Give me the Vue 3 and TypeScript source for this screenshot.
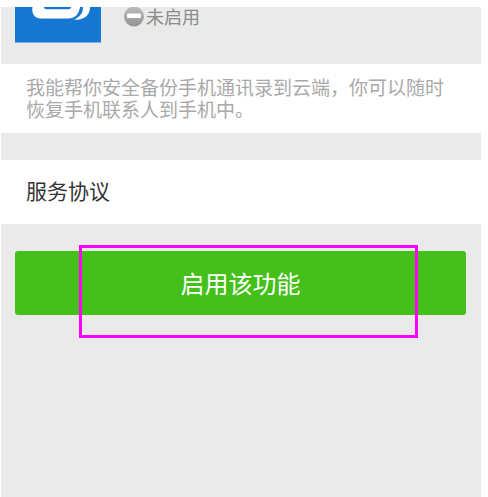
<script setup lang="ts">
import { ref } from 'vue'

const enabled = ref<boolean>(false)

function enable(): void {
  enabled.value = true
}
</script>

<template>
  <main class="screen">
    <header class="plugin">
      <svg class="logo" viewBox="0 0 86 36" aria-hidden="true">
        <path fill="#1677d3" d="M0 0h86v35.5H0z" />
        <path fill="#fff" d="M17.5 0C16.5 6 19 11.5 26 11.5H53C60 11.5 64 7 65 0H56C56 1.500 55 2.200 53 2.200H32C30 2.200 29 1.500 29 0Z" />
        <path fill="#fff" d="M68 0C68 6 65 10 59 12.500C68 13.500 75 9 75 0Z" />
      </svg>
      <p class="status">
        <svg class="badge" viewBox="0 0 20 20" aria-hidden="true">
          <defs>
            <linearGradient id="badge-fill" x1="0" y1="0" x2="0" y2="1">
              <stop offset="0" stop-color="#bdbdbd" />
              <stop offset="1" stop-color="#929292" />
            </linearGradient>
          </defs>
          <circle cx="10" cy="9.500" r="10" fill="url(#badge-fill)" />
          <rect x="3" y="6.500" width="14" height="4.500" rx="1" fill="#fff" />
        </svg>
        <span>{{ enabled ? '已启用' : '未启用' }}</span>
      </p>
    </header>

    <p class="intro">我能帮你安全备份手机通讯录到云端，你可以随时恢复手机联系人到手机中。</p>

    <a class="terms" href="#">服务协议</a>

    <div class="action">
      <button class="enable" type="button" @click="enable">启用该功能</button>
      <div class="highlight"></div>
    </div>
  </main>
</template>

<style>
body {
  background: #fff;
}
</style>

<style scoped>
.screen {
  box-sizing: border-box;
  min-height: calc(100vh - 7px);
  margin: 7px 7px 0 1px;
  background: #eaeaea;
  font-family: "Noto Sans CJK SC", sans-serif;
}

.plugin {
  display: flex;
  align-items: flex-start;
  gap: 23px;
  height: 57px;
  padding-left: 14px;
}

.logo {
  width: 86px;
  height: 36px;
}

.status {
  display: flex;
  align-items: flex-start;
  gap: 2px;
  margin: 0;
  color: #8c8c8c;
  font-size: 18px;
  line-height: 18px;
}

.badge {
  width: 20px;
  height: 20px;
}

.intro {
  margin: 0;
  padding: 12px 25px 13px;
  background: #fff;
  color: #a9a9a9;
  font-size: 19px;
  line-height: 22px;
}

.terms {
  display: block;
  margin-top: 27px;
  padding: 14px 25px 18px;
  background: #fff;
  color: #333;
  font-size: 21px;
  line-height: 32px;
  text-decoration: none;
}

.action {
  position: relative;
  margin: 27px 15px 0 14px;
}

.enable {
  display: block;
  width: 100%;
  padding: 16px;
  border: 0;
  border-radius: 3px;
  background: #45c01a;
  color: #fff;
  font-family: inherit;
  font-size: 24px;
  line-height: 32px;
}

.highlight {
  position: absolute;
  inset: -6px 48px -23px 64px;
  border: 3px solid #f0f;
  pointer-events: none;
}
</style>
